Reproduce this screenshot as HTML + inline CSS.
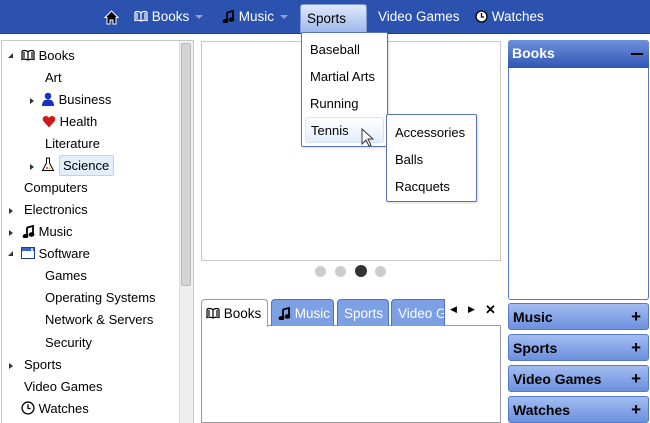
<!DOCTYPE html>
<html><head><style>
*{margin:0;padding:0;box-sizing:border-box}
body{width:650px;height:423px;overflow:hidden;background:#fff;font-family:"Liberation Sans",sans-serif;font-size:13px;color:#000;position:relative}
.a{position:absolute}
#top{left:0;top:0;width:650px;height:34px;background:#2a52ae;border-bottom:1px solid #1d3f8c}
.mi{position:absolute;top:9px;color:#fff;font-size:13.5px;white-space:nowrap}
.caret{display:inline-block;width:0;height:0;border-left:4px solid transparent;border-right:4px solid transparent;border-top:4px solid #8aa0d6;vertical-align:middle;margin-left:6px}
#sports{left:300px;top:4px;width:67px;height:29px;background:linear-gradient(#dfe9fb,#9fb8ec);border:1px solid #7f9ad8;border-radius:3px 3px 0 0;padding:6px 0 0 6px;font-size:13.5px}
.dd{border:1px solid #5873b8;background:#fff;border-radius:2px;box-shadow:1px 1px 2px rgba(0,0,0,.15)}
.dd div{position:absolute;left:8px;white-space:nowrap}
.tree div{position:absolute;white-space:nowrap}
.tri{display:inline-block;width:0;height:0;border-top:3.5px solid transparent;border-bottom:3.5px solid transparent;border-left:4px solid #333}
.trid{display:block;width:0;height:0;border-left:5px solid transparent;border-bottom:5px solid #333}
.acc{position:absolute;left:508px;width:141px;height:27px;background:linear-gradient(#a3bdf0,#6c90df);border:1px solid #5779c9;border-radius:3px;font-weight:bold;font-size:14px;padding:5px 0 0 4px;color:#000}
.acc span{position:absolute;right:7px;top:3px;font-size:17px}
.tab{position:absolute;top:299px;height:27px;background:#7d9fe4;border:1px solid #4f72c4;border-bottom:none;border-radius:4px 4px 0 0;color:#fff;padding:6px 0 0 6px;font-size:13.5px;white-space:nowrap;overflow:hidden}
svg{vertical-align:-2px}
</style></head><body>
<svg style="display:none"><defs>
<g id="book"><path d="M1 3Q1 1.5 3.5 1.5Q6 1.5 7 3Q8 1.5 10.5 1.5Q13 1.5 13 3V10.5Q10.5 9.5 7 11Q3.5 9.5 1 10.5Z M7 3V11 M3 3V9 M11 3V9" fill="none" stroke-width="1.2"/></g>
<g id="note"><path d="M5 2.5L11 1V9.5" fill="none" stroke-width="1.8"/><path d="M5 2.5V11.5" fill="none" stroke-width="1.8"/><ellipse cx="3.5" cy="11.3" rx="2.4" ry="1.8"/><ellipse cx="9.5" cy="9.5" rx="2.4" ry="1.8"/></g>
</defs></svg>
<div id="top" class="a"></div>
<svg class="a" style="left:104px;top:10px" width="15" height="15" viewBox="0 0 15 15"><path d="M7.5 1 L14 7.5 L12 7.5 L12 14 L9 14 L9 10 L6 10 L6 14 L3 14 L3 7.5 L1 7.5Z" fill="#000" stroke="#fff" stroke-width="1"/></svg>
<div class="mi" style="left:134px"><svg width="14" height="13" viewBox="0 0 14 13"><use href="#book" stroke="#fff"/></svg> Books<span class="caret"></span></div>
<div class="mi" style="left:222px"><svg width="13" height="13" viewBox="0 0 13 13" fill="#000" stroke="#000"><use href="#note"/></svg> Music<span class="caret"></span></div>
<div id="sports" class="a">Sports</div>
<div class="mi" style="left:378px">Video Games</div>
<div class="mi" style="left:475px"><svg width="13" height="13" viewBox="0 0 13 13"><circle cx="6.5" cy="6.5" r="5.5" fill="#fff" stroke="#000" stroke-width="1.3"/><path d="M6.5 3v4h2.5" stroke="#000" stroke-width="1.3" fill="none"/></svg> Watches</div>

<div class="a" style="left:1px;top:40px;width:193px;height:383px;border:1px solid #c8c8c8;border-bottom:none"></div>
<div class="a" style="left:179px;top:41px;width:14px;height:382px;background:#eee;border-left:1px solid #ddd"></div>
<div class="a" style="left:181px;top:43px;width:10px;height:243px;background:#d4d4d4;border:1px solid #bbb;border-radius:2px"></div>
<div class="tree">
<div style="left:8px;top:53px"><span class="trid"></span></div>
<div style="left:21px;top:48px"><svg width="14" height="13" viewBox="0 0 14 13"><use href="#book" stroke="#000"/></svg> Books</div>
<div style="left:45px;top:70px">Art</div>
<div style="left:30px;top:92px"><span class="tri"></span></div>
<div style="left:41px;top:92px"><svg width="14" height="14" viewBox="0 0 14 14"><circle cx="7" cy="4" r="3.3" fill="#1632c8"/><path d="M1 14 Q1 7.5 7 7.5 Q13 7.5 13 14Z" fill="#1632c8"/></svg> Business</div>
<div style="left:42px;top:114px"><svg width="14" height="13" viewBox="0 0 14 13"><path d="M7 12.5 L1.2 6 Q-.5 2 3.5 1 Q6 .8 7 3 Q8 .8 10.5 1 Q14.5 2 12.8 6Z" fill="#d01818"/></svg> Health</div>
<div style="left:45px;top:136px">Literature</div>
<div style="left:30px;top:158px"><span class="tri"></span></div>
<div style="left:41px;top:157px"><svg width="14" height="15" viewBox="0 0 14 15"><path d="M5 1h4M5.5 1v5L1.5 13.5h11L8.5 6V1" fill="#fff" stroke="#000"/><circle cx="6" cy="11" r="1" fill="#e33"/><circle cx="8.5" cy="11.5" r="1" fill="#eb0"/></svg></div>
<div style="left:59px;top:155px;width:55px;height:21px;background:#e2eefc;border:1px solid #bcd3f0;border-radius:2px;padding:2px 0 0 3px">Science</div>
<div style="left:24px;top:180px">Computers</div>
<div style="left:9px;top:202px"><span class="tri"></span></div>
<div style="left:24px;top:202px">Electronics</div>
<div style="left:9px;top:224px"><span class="tri"></span></div>
<div style="left:22px;top:224px"><svg width="13" height="13" viewBox="0 0 13 13" fill="#000" stroke="#000"><use href="#note"/></svg> Music</div>
<div style="left:8px;top:251px"><span class="trid"></span></div>
<div style="left:21px;top:246px"><svg width="14" height="14" viewBox="0 0 14 14"><rect x=".5" y="1.5" width="13" height="11" fill="#fff" stroke="#1c3c8c"/><rect x="1" y="2" width="12" height="3" fill="#3a62c8"/><rect x="10" y="2.5" width="2" height="2" fill="#fff"/></svg> Software</div>
<div style="left:45px;top:268px">Games</div>
<div style="left:45px;top:290px">Operating Systems</div>
<div style="left:45px;top:312px">Network &amp; Servers</div>
<div style="left:45px;top:335px">Security</div>
<div style="left:9px;top:357px"><span class="tri"></span></div>
<div style="left:24px;top:357px">Sports</div>
<div style="left:24px;top:379px">Video Games</div>
<div style="left:21px;top:401px"><svg width="14" height="14" viewBox="0 0 13 13"><circle cx="6.5" cy="6.5" r="5.5" fill="#fff" stroke="#000" stroke-width="1.2"/><path d="M6.5 3v4h2.5" stroke="#000" stroke-width="1.2" fill="none"/></svg> Watches</div>
</div>

<div class="a" style="left:201px;top:41px;width:300px;height:220px;border:1px solid #c8c8c8"></div>
<div class="a" style="left:315px;top:266px;width:11px;height:11px;border-radius:50%;background:#ccc"></div>
<div class="a" style="left:335px;top:266px;width:11px;height:11px;border-radius:50%;background:#ccc"></div>
<div class="a" style="left:355px;top:265px;width:12px;height:12px;border-radius:50%;background:#333"></div>
<div class="a" style="left:375px;top:266px;width:11px;height:11px;border-radius:50%;background:#ccc"></div>
<div class="a" style="left:201px;top:325px;width:300px;height:98px;border:1px solid #999"></div>
<div class="a" style="left:201px;top:299px;width:67px;height:28px;background:#fff;border:1px solid #999;border-bottom:none;border-radius:4px 4px 0 0;padding:6px 0 0 4px;font-size:13.5px;white-space:nowrap"><svg width="14" height="13" viewBox="0 0 14 13"><use href="#book" stroke="#000"/></svg> Books</div>
<div class="tab" style="left:271px;width:63px"><svg width="13" height="13" viewBox="0 0 13 13" fill="#000" stroke="#000"><use href="#note"/></svg> Music</div>
<div class="tab" style="left:337px;width:52px">Sports</div>
<div class="tab" style="left:391px;width:54px;border-radius:4px 0 0 0">Video Ga</div>
<div class="a" style="left:450px;top:304px;font-size:9px">◀</div>
<div class="a" style="left:468px;top:304px;font-size:9px">▶</div>
<div class="a" style="left:485px;top:302px;font-size:13px;font-weight:bold">✕</div>

<div class="a dd" style="left:301px;top:32px;width:87px;height:115px">
<div style="top:9px">Baseball</div><div style="top:36px">Martial Arts</div><div style="top:63px">Running</div>
<div style="left:3px;top:84px;width:79px;height:26px;background:linear-gradient(#fff,#e3edfb);border:1px solid #d6e3f6;border-radius:3px;padding:5px 0 0 5px">Tennis</div>
</div>
<svg class="a" style="left:361px;top:128px" width="13" height="20" viewBox="0 0 13 20"><path d="M1 1v15l4-4 3 6 2-1-3-6h5z" fill="#fff" stroke="#333"/></svg>
<div class="a dd" style="left:386px;top:114px;width:91px;height:88px">
<div style="top:10px">Accessories</div><div style="top:37px">Balls</div><div style="top:64px">Racquets</div>
</div>

<div class="a" style="left:508px;top:40px;width:141px;height:260px;border:1px solid #5779c9;border-radius:3px;background:#fff"></div>
<div class="a" style="left:508px;top:40px;width:141px;height:28px;background:linear-gradient(#6e92dc,#2f56b4);border-radius:3px 3px 0 0;color:#fff;font-weight:bold;font-size:14px;padding:5px 0 0 4px">Books<div class="a" style="right:6px;top:13px;width:12px;height:2px;background:#000"></div></div>
<div class="acc" style="top:303px">Music<span>+</span></div>
<div class="acc" style="top:334px">Sports<span>+</span></div>
<div class="acc" style="top:365px">Video Games<span>+</span></div>
<div class="acc" style="top:396px">Watches<span>+</span></div>
</body></html>
